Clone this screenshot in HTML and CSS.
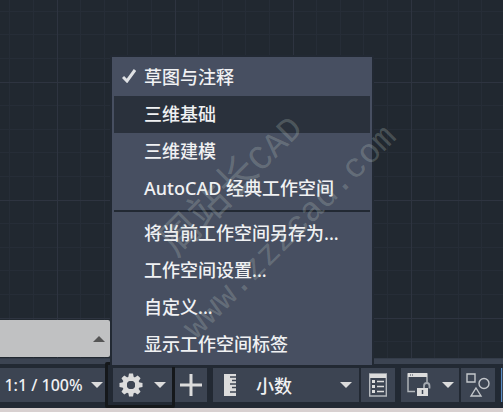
FILE: index.html
```html
<!DOCTYPE html>
<html lang="zh-CN">
<head>
    <meta charset="UTF-8">
    <meta name="viewport" content="width=device-width, initial-scale=1.0">
    <title>AutoCAD</title>
    <link rel="stylesheet" href="styles.css">
</head>
<body>
    <main class="canvas">
        <div class="command-line">
            <button class="history" aria-label="命令历史">
                <svg width="12" height="6" viewBox="0 0 12 6"><path d="M0 6L6 0l6 6z" fill="#555"/></svg>
            </button>
        </div>
    </main>

    <footer class="status">
        <div class="strip"></div>
        <div class="bar">
            <button class="tool scale">
                1:1 / 100%
                <svg width="12" height="6" viewBox="0 0 12 6"><path d="M0 0h12L6 6z" fill="#dcdcdc"/></svg>
            </button>

            <div class="workspace">
                <button class="tool gear" aria-label="切换工作空间">
                    <svg width="24" height="24" viewBox="-12 -12 24 24">
                        <g fill="#dcdcdc">
                            <path d="M-2-11.5h4l1 5h-6zM-2 11.5h4l1-5h-6z"/>
                            <path d="M-2-11.5h4l1 5h-6zM-2 11.5h4l1-5h-6z" transform="rotate(45)"/>
                            <path d="M-2-11.5h4l1 5h-6zM-2 11.5h4l1-5h-6z" transform="rotate(90)"/>
                            <path d="M-2-11.5h4l1 5h-6zM-2 11.5h4l1-5h-6z" transform="rotate(135)"/>
                        </g>
                        <circle r="6.3" fill="none" stroke="#dcdcdc" stroke-width="4.6"/>
                        <circle r="4" fill="#3c4452"/>
                    </svg>
                    <svg width="12" height="6" viewBox="0 0 12 6"><path d="M0 0h12L6 6z" fill="#dcdcdc"/></svg>
                </button>

                <ul class="menu">
                    <li><button class="item">
                        <svg class="check" width="14" height="14" viewBox="0 0 14 14"><path d="M1 8l4 4 8-11" fill="none" stroke="#dfe1e4" stroke-width="3"/></svg>
                        草图与注释</button></li>
                    <li><button class="item active">三维基础</button></li>
                    <li><button class="item">三维建模</button></li>
                    <li><button class="item">AutoCAD 经典工作空间</button></li>
                    <li class="separator"></li>
                    <li><button class="item">将当前工作空间另存为...</button></li>
                    <li><button class="item">工作空间设置...</button></li>
                    <li><button class="item">自定义...</button></li>
                    <li><button class="item">显示工作空间标签</button></li>
                </ul>
            </div>

            <button class="tool plus" aria-label="注释监视器">
                <svg width="22" height="22" viewBox="0 0 22 22"><path d="M11 0v22M0 11h22" stroke="#dcdcdc" stroke-width="3"/></svg>
            </button>
            <button class="tool units">
                <svg width="12" height="22" viewBox="0 0 12 22">
                    <path d="M0 0h12v22H0z" fill="#dcdcdc"/>
                    <path d="M6 3h6M8 6.5h4M6 10h6M8 13.5h4M6 18h6" stroke="#3c4452" stroke-width="1.5"/>
                </svg>
                <span class="units-name">小数</span>
                <svg width="12" height="6" viewBox="0 0 12 6"><path d="M0 0h12L6 6z" fill="#dcdcdc"/></svg>
            </button>
            <button class="tool props" aria-label="快捷特性">
                <svg width="18" height="24" viewBox="0 0 18 24">
                    <path d="M.7 1h16.6v22H.7z" fill="none" stroke="#b4b8bd" stroke-width="1.4"/>
                    <path d="M1 1h16v4H1z" fill="#dcdcdc"/>
                    <path d="M3 7h3v3H3zM3 12h3v3H3zM3 17h3v3H3z" fill="#dcdcdc"/>
                    <path d="M8 8.5h7M8 13.5h7M8 18.5h7" stroke="#dcdcdc" stroke-width="1.4"/>
                </svg>
            </button>
            <button class="tool lock" aria-label="锁定用户界面">
                <svg width="24" height="24" viewBox="0 0 24 24">
                    <path d="M8 18.5H1V1h19v9" fill="none" stroke="#b4b8bd" stroke-width="1.4"/>
                    <path d="M1 0h19v4H1z" fill="#dcdcdc"/>
                    <path d="M3 2h1M5 2h1" stroke="#3c4452"/>
                    <path d="M17 15v-2c0-4 5.5-4 5.5 0v2.5" fill="none" stroke="#a4a9b0" stroke-width="1.8"/>
                    <path d="M10 15h11v8H10z" fill="#dcdcdc"/>
                    <path d="M15.5 17v4" stroke="#3c4452" stroke-width="1.5"/>
                </svg>
                <svg width="12" height="6" viewBox="0 0 12 6"><path d="M0 0h12L6 6z" fill="#dcdcdc"/></svg>
            </button>
            <button class="tool shapes" aria-label="隔离对象">
                <svg width="24" height="24" viewBox="0 0 24 24" fill="none" stroke="#c4c7cb" stroke-width="1.4">
                    <path d="M1 1h8v8H1zM10 15l5 8H5z"/>
                    <circle cx="18" cy="10.5" r="5"/>
                </svg>
            </button>
            <button class="tool more" aria-label="硬件加速"></button>
        </div>
    </footer>

    <div class="watermark">
        <p class="mark-name">周站长<span class="mark-latin">CAD</span></p>
        <p class="mark-latin">www.zzzcad.com</p>
    </div>
</body>
</html>
```
FILE: styles.css
```css
* { box-sizing: border-box; }

body {
    margin: 0;
    min-height: 100vh;
    display: flex;
    flex-direction: column;
    overflow: hidden;
    position: relative;
    background-color: #222933;
    color: #f0f1f3;
    font-family: "Noto Sans", "Noto Sans CJK SC", sans-serif;
    font-size: 18px;
    font-weight: 500;
}

button { border: 0; padding: 0; color: inherit; font: inherit; cursor: pointer; }
svg { display: block; flex: none; }

/* drawing area with major and minor grid lines */
.canvas {
    flex: 1;
    display: flex;
    align-items: flex-end;
    padding-bottom: 1px;
    background-color: #212830;
    background-image:
        linear-gradient(90deg, #2e3440 1px, transparent 1px),
        linear-gradient(#2e3440 1px, transparent 1px),
        linear-gradient(90deg, transparent 23px, #262d37 23px 24px, transparent 24px 47px, #262d37 47px 48px, transparent 48px 70px, #262d37 70px 71px, transparent 71px 94px, #262d37 94px 95px, transparent 95px),
        linear-gradient(transparent 23px, #262d37 23px 24px, transparent 24px 47px, #262d37 47px 48px, transparent 48px 70px, #262d37 70px 71px, transparent 71px 94px, #262d37 94px 95px, transparent 95px);
    background-size: 118px 118px;
    background-position: 57px 82px;
}

.command-line {
    width: 110px;
    height: 37px;
    display: flex;
    align-items: center;
    justify-content: flex-end;
    padding-right: 5px;
    background: #c0c1c2;
    border-radius: 0 2px 2px 0;
}
.history { background: none; }

.strip { height: 6px; background: #3c4452; border-top: 1px solid #343c49; }

.bar {
    display: flex;
    align-items: center;
    height: 48px;
    padding-bottom: 2px;
    background: #222933;
    border-bottom: 4px solid #d8d0d0;
}

.tool {
    display: flex;
    align-items: center;
    justify-content: center;
    flex: none;
    height: 34px;
    background: #3c4452;
    white-space: nowrap;
}
.scale { width: 105px; gap: 8px; padding-left: 2px; font-size: 16px; }
.workspace {
    position: relative;
    flex: none;
    padding: 3px 0 3px 5px;
    border: 3px solid #15181b;
    border-radius: 2px;
}
.gear { width: 59px; gap: 11px; }
.plus { width: 32px; }
.units { width: 146px; margin-left: 6px; padding: 0 7px 0 11px; gap: 20px; }
.units-name { flex: 1; text-align: left; }
.props { width: 34px; margin-left: 2px; }
.lock { width: 58px; margin-left: 6px; gap: 11px; }
.shapes { width: 34px; margin-left: 2px; }
.more { flex: 1; margin-left: 6px; border-left: 1px solid #5b8fc7; }

.menu {
    position: absolute;
    bottom: 38px;
    left: 2px;
    width: 264px;
    margin: 0;
    padding: 2px;
    list-style: none;
    background: #474f61;
    border: 2px solid #222933;
}
.item {
    display: flex;
    align-items: center;
    width: 100%;
    height: 37px;
    padding: 0 0 3px 30px;
    background: none;
    white-space: nowrap;
}
.item.active { background: #2a313c; }
.check { margin: 0 8px 0 -22px; }
.separator { height: 2px; margin: 3px 0; background: #222933; }

/* diagonal mark over the whole screen */
.watermark {
    position: absolute;
    top: 130px;
    left: 120px;
    transform: rotate(-45deg);
    color: rgba(200, 215, 205, 0.24);
    font-size: 40px;
    line-height: 72px;
    font-weight: 400;
    white-space: nowrap;
    pointer-events: none;
}
.watermark p { margin: 0; }
.mark-name { padding-left: 44px; }
.mark-latin { font-family: "Liberation Mono", monospace; font-size: 34px; }
```
